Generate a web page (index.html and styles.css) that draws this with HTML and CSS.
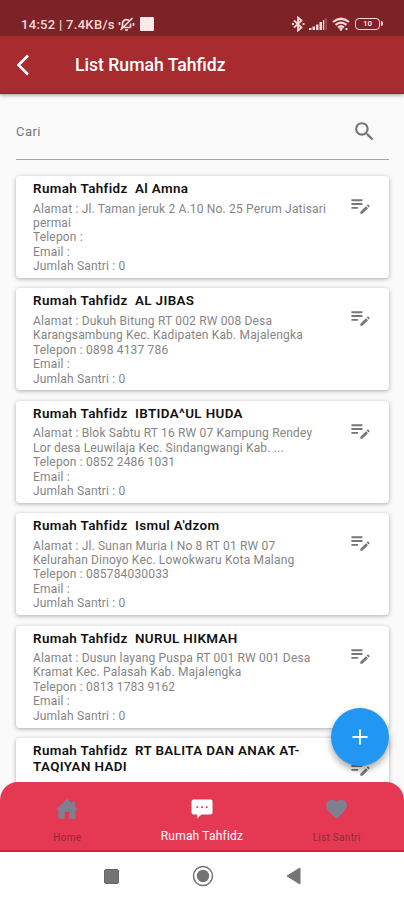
FILE: index.html
```
<!DOCTYPE html>
<html lang="id">
<head>
<meta charset="utf-8">
<title>List Rumah Tahfidz</title>
<link rel="stylesheet" href="styles.css">
</head>
<body>
<svg width="0" height="0" class="defs">
  <symbol id="edit-note" viewBox="0 0 24 24"><path d="M2.500 9.500h11.500v2H2.500zm0-4h11.500v2H2.500zm0 8h7v2h-7zm15.900-1.500.710-.710a1 1 0 0 1 1.410 0l.710.710a1 1 0 0 1 0 1.410l-.710.710zm-.710.710-5.900 5.900V20.700h2.120l5.900-5.900z"/></symbol>
</svg>
<div class="screen">
  <header class="top">
    <div class="status">
      <span class="clock">14:52 | 7.4KB/s</span>
      <svg class="mute" width="17" height="16" viewBox="0 0 17 16" fill="none" stroke="currentColor" stroke-width="1.700"><path d="M3 11.500h9.500M4.500 11V7.500a4 4 0 0 1 7-2.500M12.500 7.500v4M7 14h3M2.500 14 14.500 2M1.500 6v3M15.500 7v3"/></svg>
      <span class="square"></span>
      <span class="grow"></span>
      <svg class="bt" width="14" height="16" viewBox="0 0 14 16" fill="none" stroke="currentColor" stroke-width="1.800"><path d="m3 4.500 7.500 7L7 14.500v-13l3.500 3L3 11.500M1 8h2M11.500 8h2"/></svg>
      <svg class="signal" width="18" height="13" viewBox="0 0 18 13" fill="currentColor"><path d="M0 10h2.500v2H0zM3.500 8.500H6V12H3.500zM7 6.500h2.500V12H7zM10.500 4H13v8h-2.500z"/><path d="M14 2h1.200v10H14z"/><path opacity=".4" d="M16.500 0h1v12h-1z"/></svg>
      <svg class="wifi" width="18" height="14" viewBox="0 0 18 14" fill="none" stroke="currentColor" stroke-width="2.200"><path d="M1 5q8-6.500 16 0M3.500 7.900q5.500-4.500 11 0M6 10.500q3-2.500 6 0"/><path d="m8 11 1 1.500 1-1.500M13.500 12h2"/></svg>
      <span class="battery">10</span>
    </div>
    <div class="appbar">
      <svg class="back" width="14" height="22" viewBox="0 0 14 22" fill="none" stroke="#fff" stroke-width="2.600"><path d="M12 1.500 2.500 11l9.500 9.500"/></svg>
      <h1>List Rumah Tahfidz</h1>
    </div>
  </header>

  <main>
    <div class="search">
      <span>Cari</span>
      <svg width="25" height="25" viewBox="0 0 24 24" fill="#757575"><path d="M15.500 14h-.790l-.280-.270A6.470 6.470 0 0 0 16 9.500 6.500 6.500 0 1 0 9.500 16c1.610 0 3.090-.590 4.230-1.570l.270.280v.790l5 4.990L20.490 19zm-6 0a4.500 4.500 0 1 1 0-9 4.500 4.500 0 0 1 0 9z"/></svg>
    </div>
    <section class="list">
      <article class="card">
        <div class="info"><h2>Rumah Tahfidz&nbsp; Al Amna</h2><p>Alamat : Jl. Taman jeruk 2 A.10 No. 25 Perum Jatisari<br>permai<br>Telepon :<br>Email :<br>Jumlah Santri : 0</p></div>
        <svg class="edit"><use href="#edit-note"/></svg>
      </article>
      <article class="card">
        <div class="info"><h2>Rumah Tahfidz&nbsp; AL JIBAS</h2><p>Alamat : Dukuh Bitung RT 002 RW 008 Desa<br>Karangsambung Kec. Kadipaten Kab. Majalengka<br>Telepon : 0898 4137 786<br>Email :<br>Jumlah Santri : 0</p></div>
        <svg class="edit"><use href="#edit-note"/></svg>
      </article>
      <article class="card">
        <div class="info"><h2>Rumah Tahfidz&nbsp; IBTIDA^UL HUDA</h2><p>Alamat : Blok Sabtu RT 16 RW 07 Kampung Rendey<br>Lor desa Leuwilaja Kec. Sindangwangi Kab. ...<br>Telepon : 0852 2486 1031<br>Email :<br>Jumlah Santri : 0</p></div>
        <svg class="edit"><use href="#edit-note"/></svg>
      </article>
      <article class="card">
        <div class="info"><h2>Rumah Tahfidz&nbsp; Ismul A'dzom</h2><p>Alamat : Jl. Sunan Muria I No 8 RT 01 RW 07<br>Kelurahan Dinoyo Kec. Lowokwaru Kota Malang<br>Telepon : 085784030033<br>Email :<br>Jumlah Santri : 0</p></div>
        <svg class="edit"><use href="#edit-note"/></svg>
      </article>
      <article class="card">
        <div class="info"><h2>Rumah Tahfidz&nbsp; NURUL HIKMAH</h2><p>Alamat : Dusun layang Puspa RT 001 RW 001 Desa<br>Kramat Kec. Palasah Kab. Majalengka<br>Telepon : 0813 1783 9162<br>Email :<br>Jumlah Santri : 0</p></div>
        <svg class="edit"><use href="#edit-note"/></svg>
      </article>
      <article class="card">
        <div class="info"><h2>Rumah Tahfidz&nbsp; RT BALITA DAN ANAK AT-<br>TAQIYAN HADI</h2></div>
        <svg class="edit"><use href="#edit-note"/></svg>
      </article>
    </section>
    <button class="fab" aria-label="Tambah"><svg width="24" height="24" viewBox="0 0 24 24" stroke="#fff" stroke-width="2"><path d="M12 4.500v15M4.500 12h15"/></svg></button>
  </main>

  <nav class="tabs">
    <div class="tab">
      <svg width="26" height="26" viewBox="0 0 24 24" fill="currentColor"><path d="M9.800 21v-6.500h4.400V21H19a1 1 0 0 0 1-1v-7.500h2L19.500 10V5h-3v2.200L12 2.500 2 12.500h2V20a1 1 0 0 0 1 1z"/></svg>
      <span>Home</span>
    </div>
    <div class="tab active">
      <svg width="24" height="24" viewBox="0 0 24 24" fill="currentColor"><path d="M3.500 2.500h17a2 2 0 0 1 2 2v11a2 2 0 0 1-2 2h-9L7 21.500v-4H3.500a2 2 0 0 1-2-2v-11a2 2 0 0 1 2-2z"/><path fill="#e53953" d="M6.500 9.300h1.700V11H6.500zm4.700 0h1.700V11h-1.700zm4.700 0h1.700V11h-1.700z"/></svg>
      <span>Rumah Tahfidz</span>
    </div>
    <div class="tab">
      <svg width="25" height="25" viewBox="0 0 24 24" fill="currentColor"><path d="m12 21.350-1.450-1.320C5.400 15.360 2 12.280 2 8.500 2 5.420 4.420 3 7.500 3c1.740 0 3.410.810 4.500 2.090C13.090 3.810 14.760 3 16.500 3 19.580 3 22 5.420 22 8.500c0 3.780-3.400 6.860-8.550 11.540z"/></svg>
      <span>List Santri</span>
    </div>
  </nav>
  <footer class="sysnav">
    <i class="recent"></i>
    <svg width="22" height="22" viewBox="0 0 22 22"><circle cx="11" cy="11" r="9.500" fill="none" stroke="#747474" stroke-width="1.500"/><circle cx="11" cy="11" r="6.200" fill="#747474"/></svg>
    <svg width="15" height="18" viewBox="0 0 15 18"><path d="M14 1v16L1 9z" fill="#747474" stroke="#747474" stroke-linejoin="round"/></svg>
  </footer>
</div>
</body>
</html>
```
FILE: styles.css
```
* { box-sizing: border-box; }
body { margin: 0; font-family: Roboto, "Liberation Sans", sans-serif; background: #fafafa; }
h1, h2, p { margin: 0; }
.defs { position: absolute; }
.screen { width: 404px; height: 900px; display: flex; flex-direction: column; overflow: hidden; }

.top { height: 94px; flex: none; background: #a82b30; box-shadow: 0 1px 4px rgba(0,0,0,.4); z-index: 1; border-bottom: 1px solid #991f24; }
.status { height: 36px; padding: 12px 21px 0 21px; display: flex; align-items: center; background: #7d2327; color: #f3d9d8; }
.clock { font-size: 13px; font-weight: 500; letter-spacing: .3px; white-space: nowrap; }
.mute { margin-left: 3px; }
.square { width: 14px; height: 14px; margin-left: 5px; background: #fbeae8; border-radius: 1px; }
.grow { flex: 1; }
.signal { margin-left: 4px; }
.wifi { margin-left: 5px; }
.battery { width: 25px; height: 12px; margin: 0 3px 0 5px; border: 1.5px solid currentColor; border-radius: 4px; font-size: 8px; font-weight: 700; line-height: 10px; text-align: center; position: relative; }
.battery::after { content: ""; position: absolute; right: -3.500px; top: 2px; width: 2px; height: 5px; border-radius: 0 2px 2px 0; background: currentColor; }
.appbar { height: 57px; padding-left: 16px; display: flex; align-items: center; }
.back { margin-top: 1px; }
h1 { margin-left: 45px; padding-top: 1px; color: #fff; font-size: 17.6px; font-weight: 500; line-height: 24px; white-space: nowrap; }

main { flex: 1; min-height: 0; position: relative; padding: 0 15px 0 16px; }
.search { height: 66px; margin-bottom: 16px; padding: 10px 12px 0 0; border-bottom: 1px solid #a5a5a5; display: flex; align-items: center; justify-content: space-between; color: #777; font-size: 13px; letter-spacing: .45px; }
.list { display: flex; flex-direction: column; gap: 10.4px; }
.card { height: 102px; flex: none; padding: 5px 17px 0; display: flex; justify-content: space-between; background: #fff; border-radius: 4px; box-shadow: 0 1px 4px rgba(0,0,0,.32); }
.info { white-space: nowrap; }
h2 { color: #111; font-size: 13.4px; font-weight: 600; line-height: 16px; letter-spacing: .37px; }
p { margin-top: 4.5px; color: #858585; font-size: 12px; line-height: 14.4px; letter-spacing: .17px; }
.edit { width: 23px; height: 23px; flex: none; margin-top: 13px; fill: #777; }
.fab { position: absolute; right: 15px; bottom: 16px; width: 58px; height: 58px; padding: 0; border: 0; border-radius: 50%; background: #2196f3; box-shadow: 0 4px 7px rgba(0,0,0,.35); display: grid; place-items: center; }

.tabs { height: 70px; flex: none; display: grid; grid-template-columns: repeat(3, 1fr); background: #e53953; border-radius: 18px 18px 0 0; border-bottom: 2px solid #d21f45; z-index: 1; }
.tab { display: flex; flex-direction: column; align-items: center; padding-top: 14px; color: #7f7f92; }
.tab svg { height: 26px; }
.tab span { margin-top: 10px; color: #8f2a3c; font-size: 10px; line-height: 12px; letter-spacing: .3px; }
.tab.active { color: #fff; }
.tab.active span { margin-top: 7px; color: #fff; font-size: 12px; line-height: 14px; letter-spacing: .2px; }
.sysnav { height: 48px; flex: none; display: flex; align-items: center; justify-content: space-between; padding: 0 103px 0 104px; background: #fff; }
.recent { width: 15px; height: 15px; border-radius: 2px; background: #747474; border: 1px solid #666; }
```
